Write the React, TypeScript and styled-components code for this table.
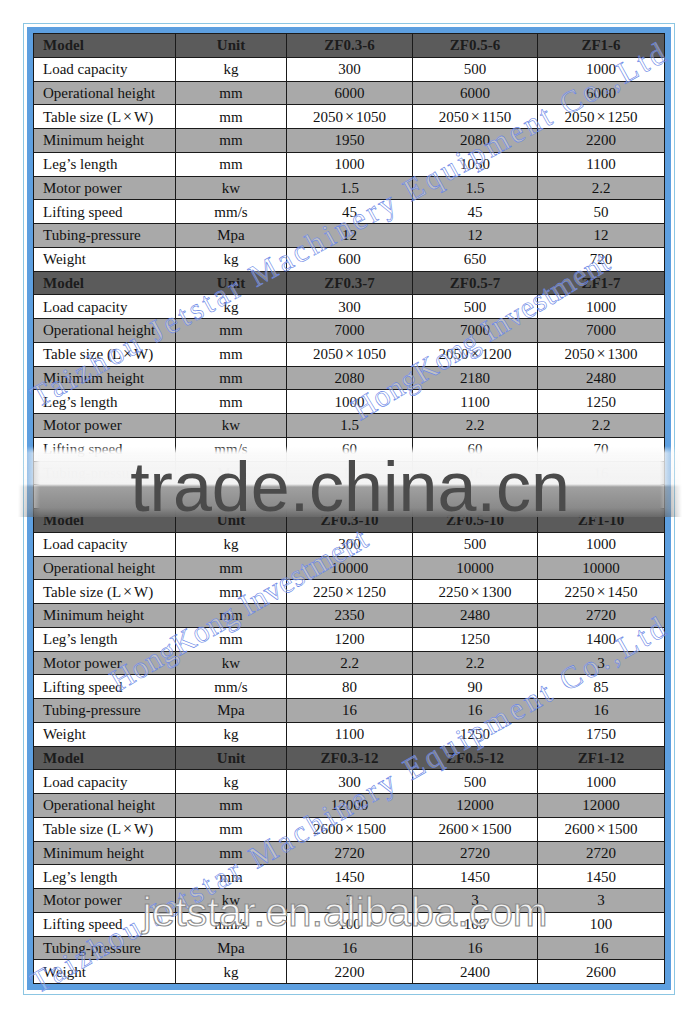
import React from 'react'
import styled, {createGlobalStyle} from 'styled-components'

const GlobalStyle = createGlobalStyle`
    html, body {
        margin: 0;
        padding: 0;
        background: #fff;
    }
    body {
        font-family: "Liberation Serif", "Times New Roman", serif;
    }
`;

const Page = styled.div`
    position: relative;
    width: 700px;
    height: 1021px;
    overflow: hidden;
    background: #fff;
    padding: 23px 0 0 23px;
    box-sizing: border-box;
`;

const Frame = styled.div`
    display: inline-block;
    border: 1px solid #8cc6e3;
    padding: 3px 3px 4px 3px;
`;

const BlueEdge = styled.div`
    border: 6px solid #5d9fe0;
    line-height: 0;
`;

const Sheet = styled.table`
    border-collapse: collapse;
    table-layout: fixed;
    width: 631px;
    height: 951px;
    font-family: "Liberation Serif", "Times New Roman", serif;
    font-size: 15px;
    color: #111;
`;

type Tone = 'head' | 'light' | 'dark';

const Row = styled.tr<{ $tone: Tone }>`
    background: ${(p) => p.$tone === 'head' ? '#5b5b5b' : p.$tone === 'light' ? '#ffffff' : '#a9a9a9'};
    font-weight: ${(p) => p.$tone === 'head' ? 700 : 400};
    color: ${(p) => p.$tone === 'head' ? '#1c1c1c' : '#111'};
`;

const Cell = styled.td<{ $label?: boolean }>`
    border: 1px solid #1a1a1a;
    padding: 0 0 0 ${(p) => p.$label ? '9px' : '0'};
    text-align: ${(p) => p.$label ? 'left' : 'center'};
    height: 22px;
    line-height: 22px;
    font-family: "Liberation Serif", "Times New Roman", serif;
    font-size: 15px;
    white-space: nowrap;
    overflow: hidden;
`;

const Cross = styled.span`
    margin: 0 2px;
    font-size: 16px;
`;

const Banner = styled.div`
    position: absolute;
    left: 18px;
    right: 18px;
    top: 446px;
    height: 71px;
    box-sizing: border-box;
    padding-top: 6px;
    overflow: hidden;
    background: linear-gradient(to bottom,
        rgba(250, 250, 250, 0) 0px,
        rgba(250, 250, 250, 0.96) 7px,
        #f3f3f3 38px,
        #a0a0a0 41px,
        #8a8a8a 62px,
        rgba(105, 105, 105, 0.92) 71px);
    mask-image: linear-gradient(to right, transparent 0, #000 22px, #000 calc(100% - 22px), transparent 100%);
    text-align: center;
    font-family: "Liberation Sans", Arial, sans-serif;
    font-size: 70px;
    line-height: 70px;
    color: #4b4b4b;
`;

const Overlay = styled.svg`
    position: absolute;
    left: 0;
    top: 0;
    width: 700px;
    height: 1021px;
    pointer-events: none;
`;

const MarkText = styled.text`
    font-family: "Liberation Serif", "Times New Roman", serif;
    font-size: 31px;
    fill: rgba(255, 255, 255, 0.3);
    stroke: #6684e6;
    stroke-width: 0.6;
`;

const SiteText = styled.text`
    font-family: "Liberation Sans", Arial, sans-serif;
    font-size: 41px;
    fill: rgba(255, 255, 255, 0.85);
    stroke: #8e8e8e;
    stroke-width: 1.1;
`;

const specs: [string, string][] = [
    ['Load capacity', 'kg'],
    ['Operational height', 'mm'],
    ['Table size (L×W)', 'mm'],
    ['Minimum height', 'mm'],
    ['Leg’s length', 'mm'],
    ['Motor power', 'kw'],
    ['Lifting speed', 'mm/s'],
    ['Tubing-pressure', 'Mpa'],
    ['Weight', 'kg'],
];

const groups: { models: string[], values: string[][] }[] = [
    {
        models: ['ZF0.3-6', 'ZF0.5-6', 'ZF1-6'],
        values: [
            ['300', '500', '1000'],
            ['6000', '6000', '6000'],
            ['2050×1050', '2050×1150', '2050×1250'],
            ['1950', '2080', '2200'],
            ['1000', '1050', '1100'],
            ['1.5', '1.5', '2.2'],
            ['45', '45', '50'],
            ['12', '12', '12'],
            ['600', '650', '720'],
        ],
    },
    {
        models: ['ZF0.3-7', 'ZF0.5-7', 'ZF1-7'],
        values: [
            ['300', '500', '1000'],
            ['7000', '7000', '7000'],
            ['2050×1050', '2050×1200', '2050×1300'],
            ['2080', '2180', '2480'],
            ['1000', '1100', '1250'],
            ['1.5', '2.2', '2.2'],
            ['60', '60', '70'],
            ['12', '16', '16'],
            ['650', '750', '820'],
        ],
    },
    {
        models: ['ZF0.3-10', 'ZF0.5-10', 'ZF1-10'],
        values: [
            ['300', '500', '1000'],
            ['10000', '10000', '10000'],
            ['2250×1250', '2250×1300', '2250×1450'],
            ['2350', '2480', '2720'],
            ['1200', '1250', '1400'],
            ['2.2', '2.2', '3'],
            ['80', '90', '85'],
            ['16', '16', '16'],
            ['1100', '1250', '1750'],
        ],
    },
    {
        models: ['ZF0.3-12', 'ZF0.5-12', 'ZF1-12'],
        values: [
            ['300', '500', '1000'],
            ['12000', '12000', '12000'],
            ['2600×1500', '2600×1500', '2600×1500'],
            ['2720', '2720', '2720'],
            ['1450', '1450', '1450'],
            ['3', '3', '3'],
            ['100', '100', '100'],
            ['16', '16', '16'],
            ['2200', '2400', '2600'],
        ],
    },
];

// diagonal company marks: start and end of the baseline
const marks = [
    {text: 'Taizhou Jetstar Machinery Equipment Co.,Ltd', from: [38, 408], to: [668, 60]},
    {text: 'HongKong Investment', from: [360, 421], to: [612, 268]},
    {text: 'HongKong Investment', from: [118, 692], to: [370, 545]},
    {text: 'Taizhou Jetstar Machinery Equipment Co.,Ltd', from: [38, 994], to: [668, 634]},
];

function withCross(text: string) {
    const parts = text.split('×');
    if (parts.length === 1) return text;
    return <>{parts[0]}<Cross>×</Cross>{parts[1]}</>;
}

export default function App(): JSX.Element {
    return <Page>
        <GlobalStyle/>
        <Frame>
            <BlueEdge>
                <Sheet>
                    <colgroup>
                        <col style={{width: 142}}/>
                        <col style={{width: 111}}/>
                        <col style={{width: 126}}/>
                        <col style={{width: 125}}/>
                        <col style={{width: 127}}/>
                    </colgroup>
                    <tbody>
                    {groups.map((g) => <React.Fragment key={g.models[0]}>
                        <Row $tone="head">
                            <Cell $label>Model</Cell>
                            <Cell>Unit</Cell>
                            {g.models.map((m) => <Cell key={m}>{m}</Cell>)}
                        </Row>
                        {specs.map(([label, unit], i) => <Row key={label} $tone={i % 2 === 0 ? 'light' : 'dark'}>
                            <Cell $label>{withCross(label)}</Cell>
                            <Cell>{unit}</Cell>
                            {g.values[i].map((v, j) => <Cell key={j}>{withCross(v)}</Cell>)}
                        </Row>)}
                    </React.Fragment>)}
                    </tbody>
                </Sheet>
            </BlueEdge>
        </Frame>
        <Banner>trade.china.cn</Banner>
        <Overlay viewBox="0 0 700 1021">
            {marks.map((m, i) => {
                const dx = m.to[0] - m.from[0];
                const dy = m.to[1] - m.from[1];
                const angle = Math.atan2(dy, dx) * 180 / Math.PI;
                const length = Math.sqrt(dx * dx + dy * dy);
                return <MarkText key={i}
                                 transform={`translate(${m.from[0]} ${m.from[1]}) rotate(${angle})`}
                                 textLength={length}
                                 lengthAdjust="spacing">{m.text}</MarkText>
            })}
            <SiteText x={345} y={926} textAnchor="middle" textLength={405}
                      lengthAdjust="spacingAndGlyphs">jetstar.en.alibaba.com</SiteText>
        </Overlay>
    </Page>
}
